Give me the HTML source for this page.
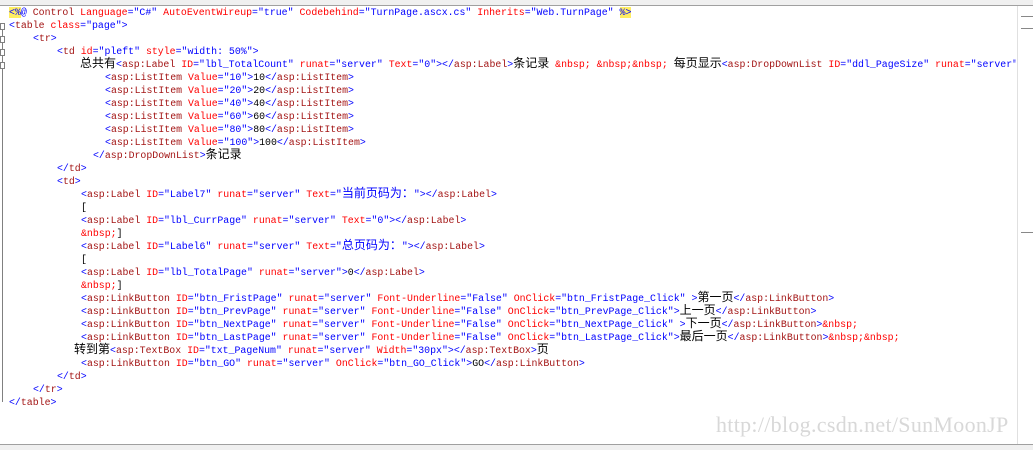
<!DOCTYPE html>
<html><head><meta charset="utf-8"><style>
body{margin:0;width:1033px;height:449px;overflow:hidden;background:#fff;position:relative}
.top{position:absolute;left:0;top:0;width:1033px;height:5px;background:#f0f0f0;border-bottom:1px solid #a0a0a0}
.code{position:absolute;left:0;top:6px;width:1016px;overflow:hidden;font-family:"Liberation Mono","Noto Sans CJK SC",monospace;font-size:9.9px;line-height:13px;color:#000}
.code div{height:13px;white-space:pre}
.c{font-size:12px;line-height:13px}
.b{color:#0000ff}.m{color:#a31515}.r{color:#ff0000}.y{background:#ffee62}
.sb{position:absolute;right:0;top:6px;width:15px;height:438px;background:#fff;border-left:1px solid #e0e0e0}
.sb i{position:absolute;left:3px;width:12px;border-top:1px solid #888}
.bot{position:absolute;left:0;top:444px;width:1033px;height:5px;background:#f0f0f0;border-top:1px solid #a0a0a0}
.wm{position:absolute;left:716px;top:412px;font-family:"Liberation Serif",serif;font-size:22px;color:#d8d8d8;letter-spacing:0.3px}
.g{position:absolute;left:2px;width:1px;background:#808080}
.fold{position:absolute;left:0;width:5px;height:7px;border:1px solid #808080;box-sizing:border-box;background:#fff}
</style></head><body>
<div class="top"></div>
<div class="g" style="top:30px;height:372px"></div>
<div class="fold" style="top:23px"></div>
<div class="fold" style="top:36px"></div>
<div class="fold" style="top:49px"></div>
<div class="fold" style="top:62px"></div>
<div class="code"><div style="padding-left:9px"><span class="b y">&lt;%</span><span class="b">@</span> <span class="m">Control</span> <span class="r">Language</span><span class="b">="C#"</span> <span class="r">AutoEventWireup</span><span class="b">="true"</span> <span class="r">Codebehind</span><span class="b">="TurnPage.ascx.cs"</span> <span class="r">Inherits</span><span class="b">="Web.TurnPage"</span> <span class="b y">%&gt;</span></div><div style="padding-left:9px"><span class="b">&lt;</span><span class="m">table</span> <span class="r">class</span><span class="b">="page"&gt;</span></div><div style="padding-left:33px"><span class="b">&lt;</span><span class="m">tr</span><span class="b">&gt;</span></div><div style="padding-left:57px"><span class="b">&lt;</span><span class="m">td</span> <span class="r">id</span><span class="b">="pleft"</span> <span class="r">style</span><span class="b">="width: 50%"&gt;</span></div><div style="padding-left:80px"><span class="c">总共有</span><span class="b">&lt;</span><span class="m">asp:Label</span> <span class="r">ID</span><span class="b">="lbl_TotalCount"</span> <span class="r">runat</span><span class="b">="server"</span> <span class="r">Text</span><span class="b">="0"&gt;&lt;/</span><span class="m">asp:Label</span><span class="b">&gt;</span><span class="c">条记录</span> <span class="r">&amp;nbsp;</span> <span class="r">&amp;nbsp;&amp;nbsp;</span> <span class="c">每页显示</span><span class="b">&lt;</span><span class="m">asp:DropDownList</span> <span class="r">ID</span><span class="b">="ddl_PageSize"</span> <span class="r">runat</span><span class="b">="server"</span></div><div style="padding-left:105px"><span class="b">&lt;</span><span class="m">asp:ListItem</span> <span class="r">Value</span><span class="b">="10"&gt;</span>10<span class="b">&lt;/</span><span class="m">asp:ListItem</span><span class="b">&gt;</span></div><div style="padding-left:105px"><span class="b">&lt;</span><span class="m">asp:ListItem</span> <span class="r">Value</span><span class="b">="20"&gt;</span>20<span class="b">&lt;/</span><span class="m">asp:ListItem</span><span class="b">&gt;</span></div><div style="padding-left:105px"><span class="b">&lt;</span><span class="m">asp:ListItem</span> <span class="r">Value</span><span class="b">="40"&gt;</span>40<span class="b">&lt;/</span><span class="m">asp:ListItem</span><span class="b">&gt;</span></div><div style="padding-left:105px"><span class="b">&lt;</span><span class="m">asp:ListItem</span> <span class="r">Value</span><span class="b">="60"&gt;</span>60<span class="b">&lt;/</span><span class="m">asp:ListItem</span><span class="b">&gt;</span></div><div style="padding-left:105px"><span class="b">&lt;</span><span class="m">asp:ListItem</span> <span class="r">Value</span><span class="b">="80"&gt;</span>80<span class="b">&lt;/</span><span class="m">asp:ListItem</span><span class="b">&gt;</span></div><div style="padding-left:105px"><span class="b">&lt;</span><span class="m">asp:ListItem</span> <span class="r">Value</span><span class="b">="100"&gt;</span>100<span class="b">&lt;/</span><span class="m">asp:ListItem</span><span class="b">&gt;</span></div><div style="padding-left:93px"><span class="b">&lt;/</span><span class="m">asp:DropDownList</span><span class="b">&gt;</span><span class="c">条记录</span></div><div style="padding-left:57px"><span class="b">&lt;/</span><span class="m">td</span><span class="b">&gt;</span></div><div style="padding-left:57px"><span class="b">&lt;</span><span class="m">td</span><span class="b">&gt;</span></div><div style="padding-left:81px"><span class="b">&lt;</span><span class="m">asp:Label</span> <span class="r">ID</span><span class="b">="Label7"</span> <span class="r">runat</span><span class="b">="server"</span> <span class="r">Text</span><span class="b">="<span class="c">当前页码为：</span>"&gt;&lt;/</span><span class="m">asp:Label</span><span class="b">&gt;</span></div><div style="padding-left:81px">[</div><div style="padding-left:81px"><span class="b">&lt;</span><span class="m">asp:Label</span> <span class="r">ID</span><span class="b">="lbl_CurrPage"</span> <span class="r">runat</span><span class="b">="server"</span> <span class="r">Text</span><span class="b">="0"&gt;&lt;/</span><span class="m">asp:Label</span><span class="b">&gt;</span></div><div style="padding-left:81px"><span class="r">&amp;nbsp;</span>]</div><div style="padding-left:81px"><span class="b">&lt;</span><span class="m">asp:Label</span> <span class="r">ID</span><span class="b">="Label6"</span> <span class="r">runat</span><span class="b">="server"</span> <span class="r">Text</span><span class="b">="<span class="c">总页码为：</span>"&gt;&lt;/</span><span class="m">asp:Label</span><span class="b">&gt;</span></div><div style="padding-left:81px">[</div><div style="padding-left:81px"><span class="b">&lt;</span><span class="m">asp:Label</span> <span class="r">ID</span><span class="b">="lbl_TotalPage"</span> <span class="r">runat</span><span class="b">="server"&gt;</span>0<span class="b">&lt;/</span><span class="m">asp:Label</span><span class="b">&gt;</span></div><div style="padding-left:81px"><span class="r">&amp;nbsp;</span>]</div><div style="padding-left:81px"><span class="b">&lt;</span><span class="m">asp:LinkButton</span> <span class="r">ID</span><span class="b">="btn_FristPage"</span> <span class="r">runat</span><span class="b">="server"</span> <span class="r">Font-Underline</span><span class="b">="False"</span> <span class="r">OnClick</span><span class="b">="btn_FristPage_Click" &gt;</span><span class="c">第一页</span><span class="b">&lt;/</span><span class="m">asp:LinkButton</span><span class="b">&gt;</span></div><div style="padding-left:81px"><span class="b">&lt;</span><span class="m">asp:LinkButton</span> <span class="r">ID</span><span class="b">="btn_PrevPage"</span> <span class="r">runat</span><span class="b">="server"</span> <span class="r">Font-Underline</span><span class="b">="False"</span> <span class="r">OnClick</span><span class="b">="btn_PrevPage_Click"&gt;</span><span class="c">上一页</span><span class="b">&lt;/</span><span class="m">asp:LinkButton</span><span class="b">&gt;</span></div><div style="padding-left:81px"><span class="b">&lt;</span><span class="m">asp:LinkButton</span> <span class="r">ID</span><span class="b">="btn_NextPage"</span> <span class="r">runat</span><span class="b">="server"</span> <span class="r">Font-Underline</span><span class="b">="False"</span> <span class="r">OnClick</span><span class="b">="btn_NextPage_Click" &gt;</span><span class="c">下一页</span><span class="b">&lt;/</span><span class="m">asp:LinkButton</span><span class="b">&gt;</span><span class="r">&amp;nbsp;</span></div><div style="padding-left:81px"><span class="b">&lt;</span><span class="m">asp:LinkButton</span> <span class="r">ID</span><span class="b">="btn_LastPage"</span> <span class="r">runat</span><span class="b">="server"</span> <span class="r">Font-Underline</span><span class="b">="False"</span> <span class="r">OnClick</span><span class="b">="btn_LastPage_Click"&gt;</span><span class="c">最后一页</span><span class="b">&lt;/</span><span class="m">asp:LinkButton</span><span class="b">&gt;</span><span class="r">&amp;nbsp;&amp;nbsp;</span></div><div style="padding-left:74px"><span class="c">转到第</span><span class="b">&lt;</span><span class="m">asp:TextBox</span> <span class="r">ID</span><span class="b">="txt_PageNum"</span> <span class="r">runat</span><span class="b">="server"</span> <span class="r">Width</span><span class="b">="30px"&gt;&lt;/</span><span class="m">asp:TextBox</span><span class="b">&gt;</span><span class="c">页</span></div><div style="padding-left:81px"><span class="b">&lt;</span><span class="m">asp:LinkButton</span> <span class="r">ID</span><span class="b">="btn_GO"</span> <span class="r">runat</span><span class="b">="server"</span> <span class="r">OnClick</span><span class="b">="btn_GO_Click"&gt;</span>GO<span class="b">&lt;/</span><span class="m">asp:LinkButton</span><span class="b">&gt;</span></div><div style="padding-left:57px"><span class="b">&lt;/</span><span class="m">td</span><span class="b">&gt;</span></div><div style="padding-left:33px"><span class="b">&lt;/</span><span class="m">tr</span><span class="b">&gt;</span></div><div style="padding-left:9px"><span class="b">&lt;/</span><span class="m">table</span><span class="b">&gt;</span></div></div>
<div class="sb"><i style="top:10px"></i><i style="top:22px"></i><i style="top:226px"></i></div>
<div class="wm">http://blog.csdn.net/SunMoonJP</div>
<div class="bot"></div>
</body></html>
